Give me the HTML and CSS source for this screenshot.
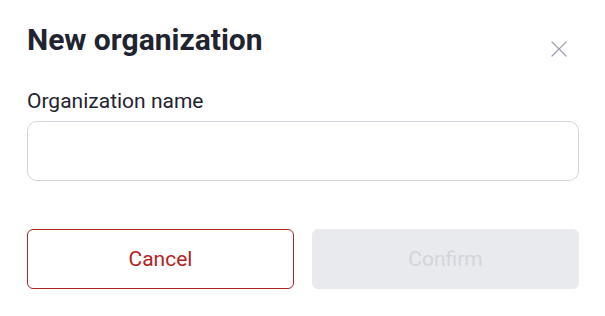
FILE: index.html
```html
<!DOCTYPE html>
<html lang="en">
<head>
<meta charset="utf-8">
<title>New organization</title>
<link rel="stylesheet" href="styles.css">
</head>
<body>
<div class="dialog">
  <div class="header">
    <h1 class="title">New organization</h1>
    <button class="close" aria-label="Close">
      <svg width="16" height="16" viewBox="0 0 16 16" fill="none" stroke="#9ca3af" stroke-width="1.3" stroke-linecap="round">
        <path d="M1 1L15 15M15 1L1 15"/>
      </svg>
    </button>
  </div>
  <label class="field">
    <span class="label">Organization name</span>
    <input class="input" type="text">
  </label>
  <div class="actions">
    <button class="btn btn-cancel">Cancel</button>
    <button class="btn btn-confirm" disabled>Confirm</button>
  </div>
</div>
</body>
</html>
```

FILE: styles.css
```css
html, body {
  margin: 0;
  padding: 0;
  background: #ffffff;
}
body {
  font-family: Roboto, "Liberation Sans", sans-serif;
  color: #1f2430;
}
.dialog {
  width: 605px;
  height: 316px;
  box-sizing: border-box;
  padding: 21px 26px 0 27px;
  display: flex;
  flex-direction: column;
}
.header {
  display: flex;
  justify-content: space-between;
  align-items: flex-start;
}
.title {
  margin: 0;
  font-size: 30px;
  line-height: 38px;
  font-weight: 700;
  color: #1f2430;
}
.close {
  margin: 20px 12px 0 0;
  padding: 0;
  border: 0;
  background: none;
  width: 16px;
  height: 16px;
  display: block;
}
.close svg { display: block; }
.field {
  display: flex;
  flex-direction: column;
  margin-top: 29px;
}
.label {
  font-size: 21px;
  line-height: 26px;
  color: #1f2430;
  margin-bottom: 7px;
}
.input {
  box-sizing: border-box;
  height: 60px;
  width: 552px;
  border: 1px solid #d1d5db;
  border-radius: 10px;
  background: #fff;
  margin: 0;
}
.actions {
  display: flex;
  gap: 18px;
  margin-top: 48px;
  width: 552px;
}
.btn {
  flex: 1;
  height: 60px;
  box-sizing: border-box;
  border-radius: 6px;
  font-family: Roboto, "Liberation Sans", sans-serif;
  font-size: 21px;
  margin: 0;
}
.btn-cancel {
  background: #fff;
  border: 1px solid #b42323;
  color: #b42323;
}
.btn-confirm {
  background: #e9eaee;
  border: 1px solid #e9eaee;
  color: #d3d5da;
}
```
